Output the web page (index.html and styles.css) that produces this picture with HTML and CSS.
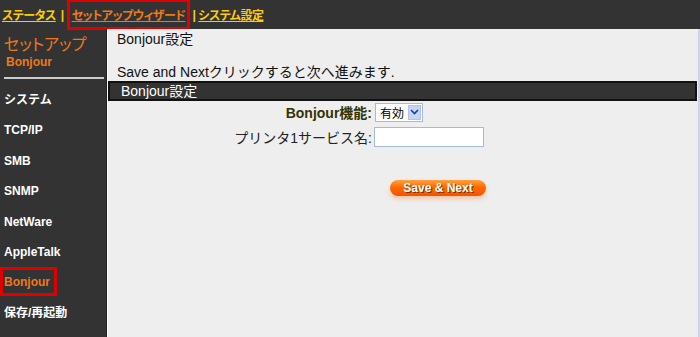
FILE: index.html
```html
<!DOCTYPE html>
<html lang="ja">

<head>
    <meta charset="UTF-8">
    <title>Bonjour設定</title>
    <link rel="stylesheet" href="styles.css">
</head>

<body>
    <div class="topnav">
        <a href="#" class="nav-link">ステータス</a>
        <span class="sep">|</span>
        <a href="#" class="nav-link nav-current">セットアップウィザード</a>
        <span class="sep sep-tight">|</span>
        <a href="#" class="nav-link">システム設定</a>
    </div>
    <div class="page">
        <div class="sidebar">
            <div class="side-title">セットアップ</div>
            <div class="side-sub">Bonjour</div>
            <hr class="side-rule">
            <ul class="menu">
                <li>システム</li>
                <li>TCP/IP</li>
                <li>SMB</li>
                <li>SNMP</li>
                <li>NetWare</li>
                <li>AppleTalk</li>
                <li class="menu-current"><span>Bonjour</span></li>
                <li>保存/再起動</li>
            </ul>
        </div>
        <div class="main">
            <h1 class="page-title">Bonjour設定</h1>
            <p class="hint">Save and Nextクリックすると次へ進みます.</p>
            <div class="bar">Bonjour設定</div>
            <div class="form">
                <label class="lbl lbl-strong">Bonjour機能:</label>
                <div class="sel">
                    <span>有効</span>
                    <span class="sel-btn">
                        <svg width="9" height="6" viewBox="0 0 9 6"><path d="M1 1 L4.5 4.5 L8 1" fill="none" stroke="#1c3f8c" stroke-width="1.6"/></svg>
                    </span>
                </div>
                <label class="lbl">プリンタ1サービス名:</label>
                <div><input type="text" class="txt"></div>
            </div>
            <div class="actions">
                <button class="btn-next">Save &amp; Next</button>
            </div>
        </div>
    </div>
</body>

</html>
```

FILE: styles.css
```css
html,
body {
    margin: 0;
    padding: 0;
    height: 100%;
}

body {
    background: #333333;
    font-family: "Liberation Sans", "Noto Sans CJK JP", sans-serif;
    overflow: hidden;
}
/*上部ナビ*/

.topnav {
    height: 29px;
    display: flex;
    align-items: center;
    padding-left: 2px;
    font-size: 12px;
    font-weight: bold;
    font-feature-settings: "palt";
    letter-spacing: -0.5px;
}

.nav-link {
    color: #ffcc00;
    text-decoration: underline;
}

.sep {
    color: #ffcc00;
    margin: 0 4px 0 5px;
}

.sep-tight {
    margin: 0 3px 0 2px;
}

.nav-current {
    color: #f07818;
    border: 3px solid #e00000;
    padding: 4px 2px 4px 2px;
    margin-left: -1px;
}

.page {
    display: flex;
    height: calc(100% - 29px);
}
/*サイドバー*/

.sidebar {
    width: 106px;
    border-right: 1px solid #222;
    flex-shrink: 0;
}

.side-title {
    color: #f07818;
    font-size: 16px;
    padding: 6px 0 0 4px;
    line-height: 20px;
    font-feature-settings: "palt";
}

.side-sub {
    color: #f07818;
    font-size: 12px;
    font-weight: bold;
    padding-left: 6px;
    line-height: 14px;
}

.side-rule {
    border: 0;
    height: 2px;
    background: #cccccc;
    margin: 8px 2px 0 4px;
}

.menu {
    list-style: none;
    margin: 6px 0 0 0;
    padding: 0;
}

.menu li {
    color: #ffffff;
    font-size: 12px;
    font-weight: bold;
    height: 30.4px;
    line-height: 30.4px;
    padding-left: 4px;
}

.menu-current span {
    color: #f07818;
    border: 3px solid #e00000;
    padding: 5px 4px 4px 1px;
    margin-left: -4px;
}
/*メイン*/

.main {
    flex: 1;
    background: #eeeeee;
    border-left: 1px solid #ffffff;
    border-right: 2px solid #c9d3ea;
}

.page-title {
    font-size: 14px;
    font-weight: normal;
    color: #111;
    margin: 0 0 0 9px;
    line-height: 20px;
}

.hint {
    font-size: 14px;
    color: #111;
    margin: 14px 0 0 9px;
    line-height: 18px;
}

.bar {
    background: #333333;
    border: 2px solid #111111;
    color: #ffffff;
    font-size: 14px;
    height: 16px;
    line-height: 16px;
    padding-left: 11px;
    margin-right: 1px;
}

.form {
    display: grid;
    grid-template-columns: 266px auto;
    row-gap: 5px;
    margin-top: 1px;
    align-items: center;
}

.lbl {
    font-size: 14px;
    color: #222;
    text-align: right;
    padding-right: 2px;
}

.lbl-strong {
    color: #333300;
    font-weight: bold;
}

.sel {
    display: flex;
    align-items: center;
    justify-content: space-between;
    height: 17px;
    margin-left: 1px;
    border: 1px solid #a5b9d8;
    background: #ffffff;
    font-size: 12px;
    font-family: "Noto Sans CJK JP", sans-serif;
    padding-left: 4px;
    width: 42px;
}

.sel-btn {
    width: 13px;
    height: 15px;
    margin-right: 1px;
    background: #c5d4f7;
    border: 1px solid #b0c2ee;
    display: flex;
    align-items: center;
    justify-content: center;
    box-sizing: border-box;
}

.txt {
    width: 108px;
    height: 18px;
    border: 1px solid #a5b9d8;
    background: #ffffff;
    padding: 0;
    display: block;
}
/*ボタン*/

.actions {
    margin: 31px 0 0 282px;
}

.btn-next {
    width: 96px;
    height: 16px;
    border: 0;
    border-radius: 8px;
    background: linear-gradient(#ffa040, #ff6a00 45%, #f05400);
    box-shadow: 0 3px 4px rgba(255, 120, 30, 0.35);
    color: #ffffff;
    font-family: "Liberation Sans", sans-serif;
    font-size: 12px;
    font-weight: bold;
    line-height: 14px;
    padding: 0;
    text-shadow: 1px 1px 0 #7a3000;
}
```
